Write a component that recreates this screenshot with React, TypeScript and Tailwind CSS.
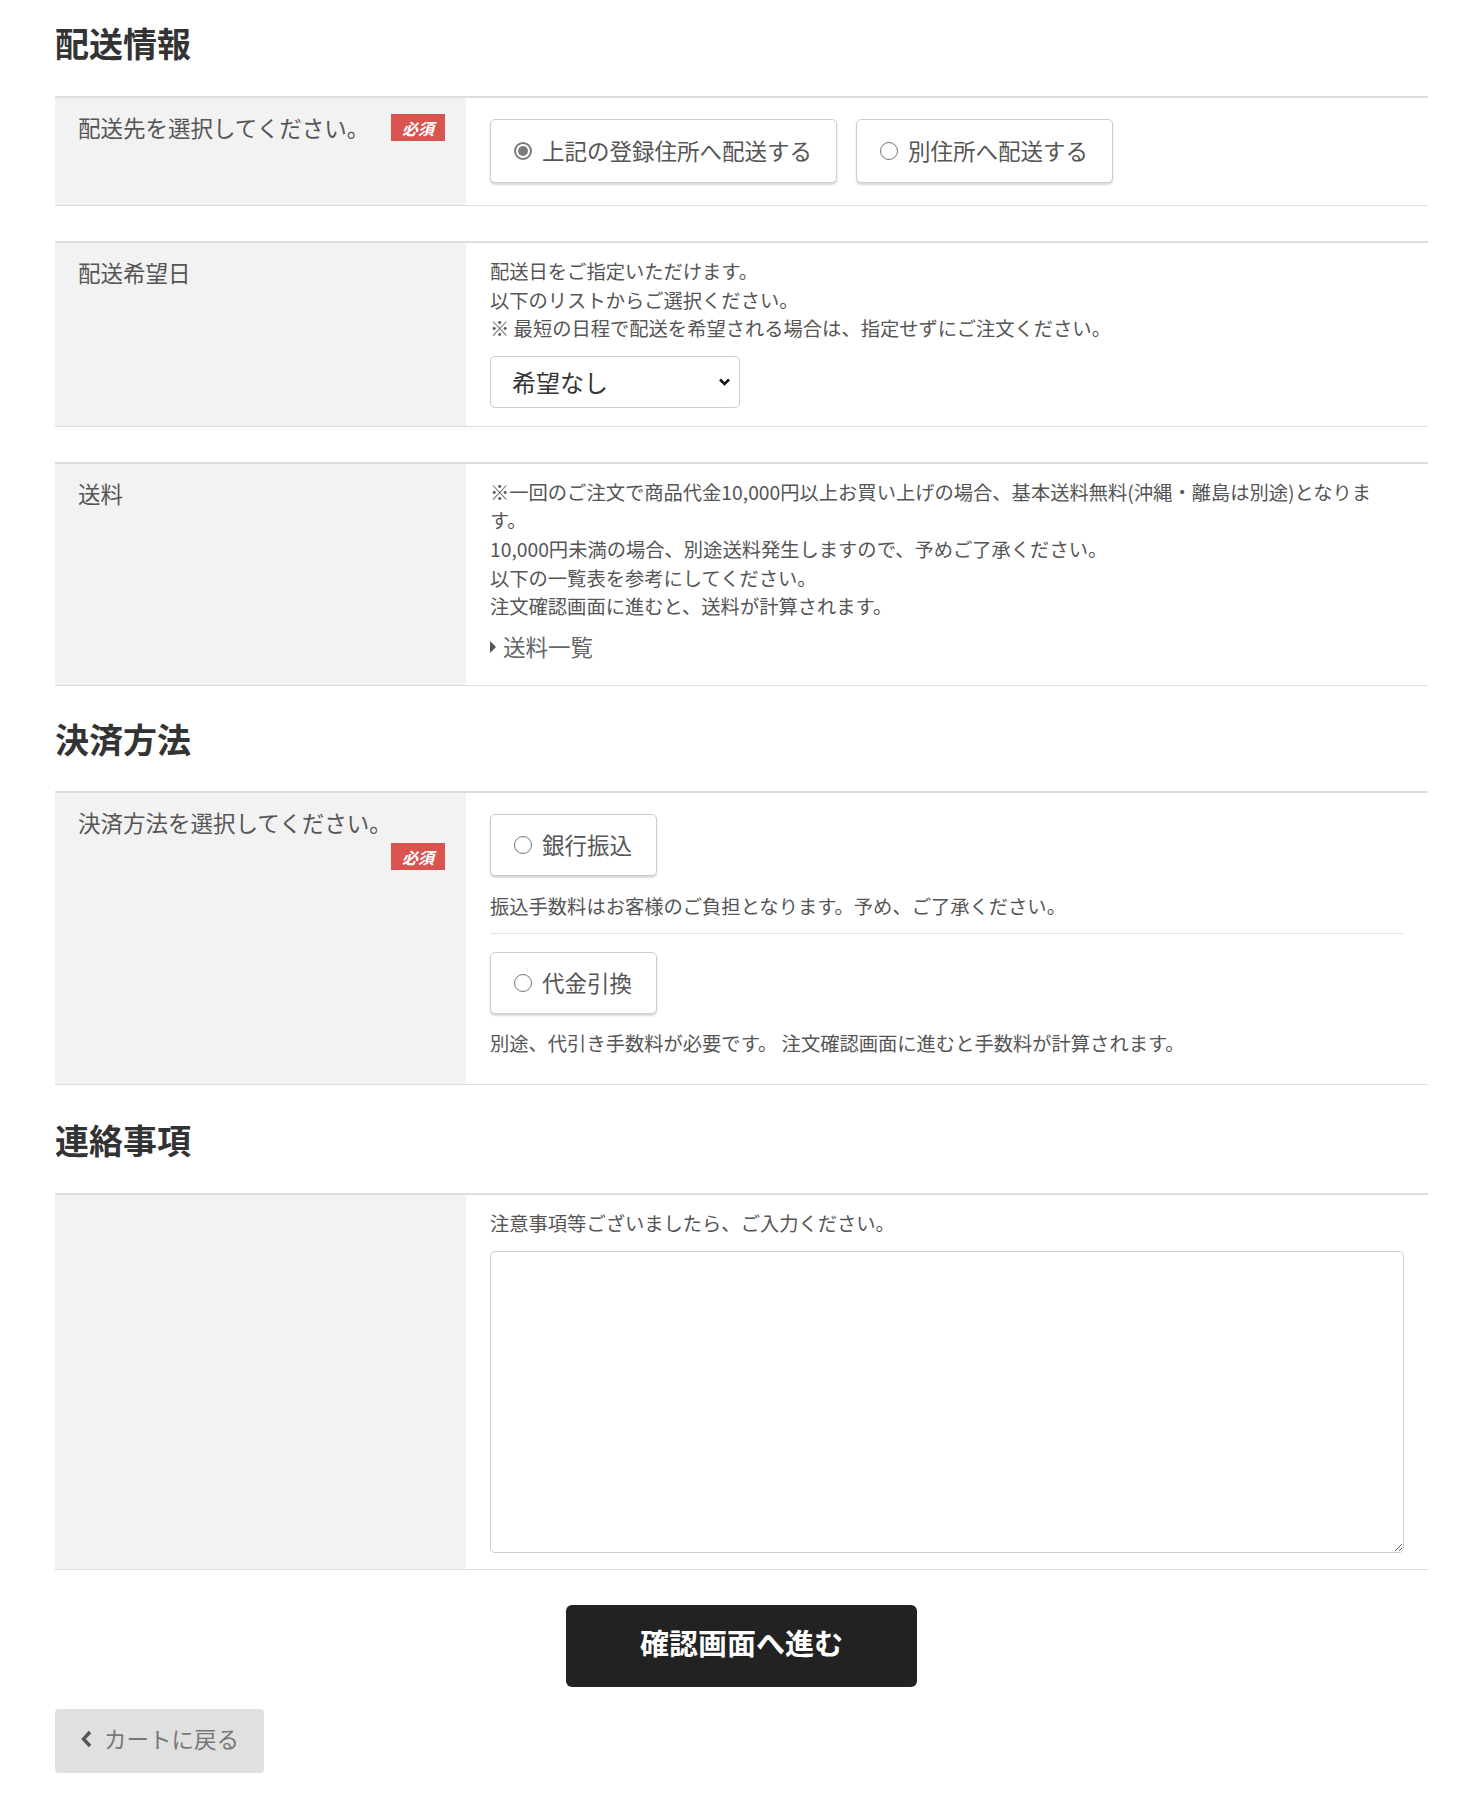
import React from 'react';

const Badge: React.FC = () => (
  <span className="ml-auto flex h-[27px] w-[54px] items-center justify-center bg-[#d9534f] text-[16px] font-bold italic leading-none text-white">
    必須
  </span>
);

interface RowProps {
  label?: string;
  required?: boolean;
  className?: string;
  children: React.ReactNode;
}

const Row: React.FC<RowProps> = ({ label, required, className = '', children }) => (
  <div className={`flex border-t-2 border-b border-[#ddd] ${className}`}>
    <div className="w-[411px] shrink-0 bg-[#f2f2f2] pl-[23px] pr-[21px] pt-[13px] pb-4">
      {label && (
        <div className="flex flex-wrap items-center gap-x-[12px] gap-y-[4px] text-[22.5px] leading-[1.5] text-[#555]">
          <span>{label}</span>
          {required && <Badge />}
        </div>
      )}
    </div>
    <div className="min-w-0 flex-1 px-6 pt-[14px] pb-4">{children}</div>
  </div>
);

const Radio: React.FC<{ checked?: boolean }> = ({ checked }) =>
  checked ? (
    <span className="mr-[10px] flex h-[18px] w-[18px] shrink-0 items-center justify-center rounded-full border-2 border-[#7a7a7a]">
      <span className="h-[10px] w-[10px] rounded-full bg-[#7a7a7a]" />
    </span>
  ) : (
    <span className="mr-[10px] h-[18px] w-[18px] shrink-0 rounded-full border-[1.5px] border-[#777]" />
  );

const Choice: React.FC<{ text: string; checked?: boolean; tall?: boolean }> = ({ text, checked, tall }) => (
  <label
    className={`flex items-center rounded-[5px] border border-[#ccc] bg-white pl-[23px] pr-[24px] text-[22.5px] text-[#555] shadow-[0_2px_2px_rgba(0,0,0,0.15)] ${
      tall ? 'h-[64px]' : 'h-[62px]'
    }`}
  >
    <Radio checked={checked} />
    <span>{text}</span>
  </label>
);

const Heading: React.FC<{ className: string; children: React.ReactNode }> = ({ className, children }) => (
  <h2 className={`text-[34px] font-bold leading-[44px] text-[#333] ${className}`}>{children}</h2>
);

const small = 'text-[19.3px] leading-[28.6px] text-[#555]';

export default function App() {
  return (
    <div className="min-h-[1793px] bg-white font-['Noto_Sans_CJK_JP',sans-serif]">
      <div className="ml-[55px] mr-[47px] pb-5">
        <Heading className="mb-[31px] pt-[21px]">配送情報</Heading>

        <Row label="配送先を選択してください。" required>
          <div className="mt-[7px] mb-[6px] flex gap-[19px]">
            <Choice text="上記の登録住所へ配送する" checked tall />
            <Choice text="別住所へ配送する" tall />
          </div>
        </Row>

        <Row label="配送希望日" className="mt-[35px]">
          <p className={small}>配送日をご指定いただけます。</p>
          <p className={small}>以下のリストからご選択ください。</p>
          <p className={small}>※ 最短の日程で配送を希望される場合は、指定せずにご注文ください。</p>
          <div className="relative mt-[13px] mb-[2px] w-[250px]">
            <select className="h-[52px] w-full appearance-none rounded-[5px] border border-[#ccc] bg-white pl-[21px] text-[24px] text-[#333] outline-none">
              <option>希望なし</option>
            </select>
            <svg
              className="pointer-events-none absolute right-[9px] top-[21px] h-[10px] w-[13px]"
              viewBox="0 0 13 10"
              fill="none"
              stroke="#111"
              strokeWidth="2.6"
            >
              <polyline points="2,2.5 6.5,7 11,2.5" />
            </svg>
          </div>
        </Row>

        <Row label="送料" className="mt-[35px]">
          <p className={small}>
            ※一回のご注文で商品代金10,000円以上お買い上げの場合、基本送料無料(沖縄・離島は別途)となります。
          </p>
          <p className={small}>10,000円未満の場合、別途送料発生しますので、予めご了承ください。</p>
          <p className={small}>以下の一覧表を参考にしてください。</p>
          <p className={small}>注文確認画面に進むと、送料が計算されます。</p>
          <div className="mt-[9px] mb-[5px] flex items-center text-[22.5px] leading-[1.5] text-[#666]">
            <span className="mr-[7px] h-0 w-0 border-y-[6px] border-l-[6px] border-y-transparent border-l-[#555]" />
            送料一覧
          </div>
        </Row>

        <Heading className="mt-[31px] mb-[30px]">決済方法</Heading>

        <Row label="決済方法を選択してください。" required>
          <div className="border-b border-[#e5e5e5] pb-[13px]">
            <div className="mt-[7px] flex">
              <Choice text="銀行振込" />
            </div>
            <p className={`${small} mt-[16px]`}>振込手数料はお客様のご負担となります。予め、ご了承ください。</p>
          </div>
          <div className="mb-[10px] pt-[12px]">
            <div className="mt-[6px] flex">
              <Choice text="代金引換" />
            </div>
            <p className={`${small} mt-[15px]`}>別途、代引き手数料が必要です。 注文確認画面に進むと手数料が計算されます。</p>
          </div>
        </Row>

        <Heading className="mt-[33px] mb-[31px]">連絡事項</Heading>

        <Row>
          <p className={small}>注意事項等ございましたら、ご入力ください。</p>
          <textarea className="mt-[14px] block h-[302px] w-full rounded-[5px] border border-[#ccc] bg-white p-3 text-[19px] text-[#333] outline-none" />
        </Row>

        <button className="mx-auto mt-[35px] flex h-[82px] w-[351px] items-center justify-center rounded-[6px] bg-[#222] pb-[8px] text-[29px] font-bold text-white">
          確認画面へ進む
        </button>

        <button className="mt-[22px] flex h-[64px] w-[209px] items-center rounded-[4px] bg-[#e0e0e0] pb-[4px] pl-[25px] text-[22.5px] text-[#777]">
          <svg className="mr-[11px] h-[18px] w-[13px]" viewBox="0 0 13 18" fill="none" stroke="#555" strokeWidth="3.4">
            <polyline points="10,2 3.5,9 10,16" />
          </svg>
          カートに戻る
        </button>
      </div>
    </div>
  );
}
